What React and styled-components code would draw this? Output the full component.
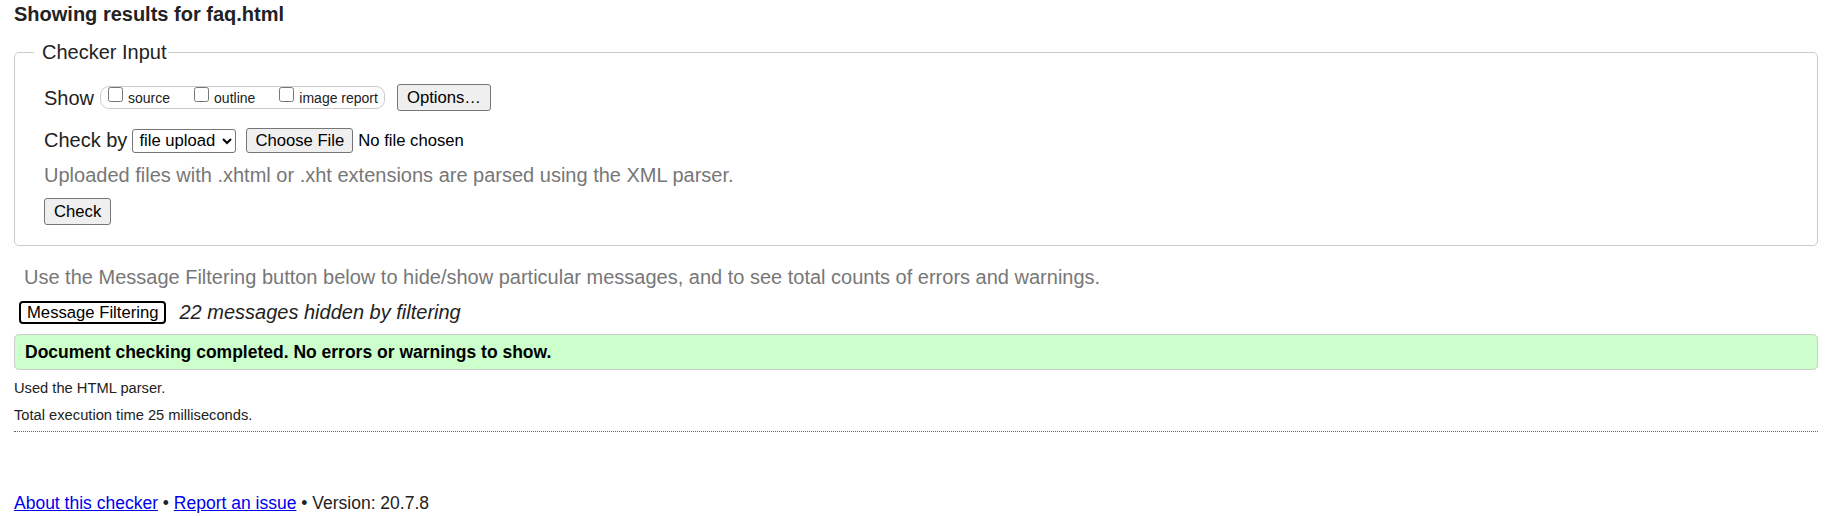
import React from "react";
import styled, { createGlobalStyle } from "styled-components";

const Global = createGlobalStyle`
  html, body { margin: 0; padding: 0; background: #fff; }
  body {
    font-family: "Liberation Sans", Arial, Helvetica, sans-serif;
    color: #222;
    font-size: 20px;
  }
`;

const Page = styled.div`
  padding: 3px 24px 0 14px;
`;

const Title = styled.h2`
  margin: 0;
  font-size: 20px;
  line-height: 23px;
  font-weight: bold;
  color: #222;
`;

const Fieldset = styled.fieldset`
  margin: 15px 0 0 0;
  padding: 0 20px 20px 29px;
  border: 1px solid #ccc;
  border-radius: 5px;
  min-width: 0;
`;

const Legend = styled.legend`
  margin-left: -10px;
  padding: 0 1px 0 8px;
  font-size: 20px;
  line-height: 23px;
  color: #222;
`;

const Row = styled.div`
  display: flex;
  align-items: center;
  height: ${(p) => p.$h || 27}px;
  margin-top: ${(p) => p.$mt || 0}px;
`;

const Label = styled.span`
  font-size: 20px;
  line-height: 23px;
  margin-top: ${(p) => p.$mt || 0}px;
  color: #222;
  white-space: nowrap;
`;

const Pill = styled.div`
  display: flex;
  align-items: flex-start;
  box-sizing: border-box;
  height: 23px;
  margin-left: 6px;
  padding: 0 6px 0 7px;
  border: 1px solid #ccc;
  border-radius: 9px;
  gap: 24px;
`;

const CheckItem = styled.label`
  display: flex;
  align-items: flex-start;
`;

const Box = styled.input`
  width: 15px;
  height: 15px;
  margin: 0 5px 0 0;
`;

const SmallText = styled.span`
  margin-top: 3px;
  font-size: 14px;
  line-height: 16px;
  color: #222;
  white-space: nowrap;
`;

const Button = styled.button`
  box-sizing: border-box;
  height: ${(p) => p.$h || 27}px;
  margin-left: ${(p) => p.$ml || 0}px;
  padding: 0 ${(p) => p.$px || 9}px;
  font-family: "Liberation Sans", Arial, sans-serif;
  font-size: 16.67px;
  color: #000;
  background: #efefef;
  border: 1px solid #767676;
  border-radius: 3px;
  white-space: nowrap;
`;

const Select = styled.select`
  box-sizing: border-box;
  width: 104px;
  height: 24px;
  margin-left: 5px;
  padding: 0 0 0 2px;
  font-family: "Liberation Sans", Arial, sans-serif;
  font-size: 16.67px;
  color: #000;
  background: #fff;
  border: 1px solid #767676;
  border-radius: 3px;
`;

const FileText = styled.span`
  margin-left: 5px;
  font-size: 16.67px;
  color: #000;
  white-space: nowrap;
`;

const Note = styled.p`
  margin: ${(p) => p.$mt || 0}px 0 0 ${(p) => p.$ml || 0}px;
  font-size: 20px;
  line-height: 23px;
  color: #777;
`;

const FilterButton = styled.button`
  box-sizing: border-box;
  height: 23px;
  margin-left: 5px;
  padding: 0 6px;
  font-family: "Liberation Sans", Arial, sans-serif;
  font-size: 16.67px;
  color: #000;
  background: #fff;
  border: 2px solid #000;
  border-radius: 4px;
`;

const Hidden = styled.em`
  margin-left: 13px;
  font-size: 20px;
  line-height: 23px;
  color: #222;
`;

const Success = styled.div`
  box-sizing: border-box;
  height: 36px;
  margin-top: 10px;
  padding: 0 10px;
  border: 1px solid #ccc;
  border-radius: 5px;
  background: #ccffcc;
  font-size: 17.5px;
  line-height: 34px;
  font-weight: bold;
  color: #000;
`;

const Meta = styled.div`
  margin-top: 5px;
`;

const MetaLine = styled.p`
  margin: 0;
  font-size: 14.7px;
  line-height: 27px;
  color: #222;
`;

const Rule = styled.div`
  margin-top: 2px;
  border-top: 1px dotted #666;
`;

const Footer = styled.p`
  margin: 61px 0 0 0;
  font-size: 17.5px;
  line-height: 20px;
  color: #222;
`;

const Link = styled.a`
  color: #0000ee;
  text-decoration: underline;
`;

export default function App() {
  return (
    <Page>
      <Global />
      <Title>Showing results for faq.html</Title>
      <Fieldset>
        <Legend>Checker Input</Legend>
        <Row $mt={20}>
          <Label $mt={1}>Show</Label>
          <Pill>
            <CheckItem>
              <Box type="checkbox" />
              <SmallText>source</SmallText>
            </CheckItem>
            <CheckItem>
              <Box type="checkbox" />
              <SmallText>outline</SmallText>
            </CheckItem>
            <CheckItem>
              <Box type="checkbox" />
              <SmallText>image report</SmallText>
            </CheckItem>
          </Pill>
          <Button $ml={12}>Options…</Button>
        </Row>
        <Row $mt={17} $h={25}>
          <Label>Check by</Label>
          <Select defaultValue="upload">
            <option value="upload">file upload</option>
          </Select>
          <Button $ml={10} $px={8} $h={25}>Choose File</Button>
          <FileText>No file chosen</FileText>
        </Row>
        <Note $mt={11}>
          Uploaded files with .xhtml or .xht extensions are parsed using the XML parser.
        </Note>
        <Row $mt={11}>
          <Button>Check</Button>
        </Row>
      </Fieldset>
      <Note $mt={20} $ml={10}>
        Use the Message Filtering button below to hide/show particular messages, and to see total counts of errors and warnings.
      </Note>
      <Row $mt={12} $h={23}>
        <FilterButton>Message Filtering</FilterButton>
        <Hidden>22 messages hidden by filtering</Hidden>
      </Row>
      <Success>Document checking completed. No errors or warnings to show.</Success>
      <Meta>
        <MetaLine>Used the HTML parser.</MetaLine>
        <MetaLine>Total execution time 25 milliseconds.</MetaLine>
      </Meta>
      <Rule />
      <Footer>
        <Link href="#">About this checker</Link> • <Link href="#">Report an issue</Link> • Version: 20.7.8
      </Footer>
    </Page>
  );
}
